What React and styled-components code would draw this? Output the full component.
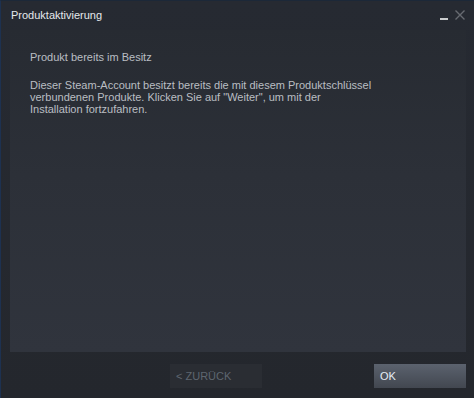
import styled, { createGlobalStyle } from 'styled-components';

const GlobalStyle = createGlobalStyle`
  html, body {
    margin: 0;
    padding: 0;
    background: #24272e;
  }
  body {
    font-family: 'Liberation Sans', Arial, sans-serif;
  }
`;

const Window = styled.div`
  box-sizing: border-box;
  width: 474px;
  height: 398px;
  display: flex;
  flex-direction: column;
  background: linear-gradient(to bottom, #262a32 0%, #24272d 100%);
  border-top: 1px solid #1c2838;
  border-left: 1px solid #1d3150;
`;

const TitleBar = styled.div`
  height: 29px;
  display: flex;
  align-items: center;
  justify-content: space-between;
  padding: 0 9px 0 10px;
`;

const Title = styled.span`
  color: #e4e8ec;
  font-size: 11px;
  margin-top: -1px;
`;

const Controls = styled.div`
  display: flex;
  align-items: flex-end;
  gap: 7px;
  height: 10px;
  margin-top: -1px;
`;

const Minimize = styled.span`
  width: 8px;
  height: 2px;
  background: #c9cbcd;
`;

const Close = styled.svg`
  display: block;
`;

const Panel = styled.div`
  flex: 1;
  margin: 0 8px 0 9px;
  padding: 21px 20px 0 20px;
  background: linear-gradient(to bottom, #272b32 0%, #2c3038 45%, #30343d 100%);
`;

const Heading = styled.div`
  color: #babec3;
  font-size: 11px;
  line-height: 13px;
  margin-bottom: 15px;
`;

const Text = styled.p`
  margin: 0;
  color: #babec3;
  font-size: 11px;
  line-height: 12px;
  white-space: nowrap;
`;

const Footer = styled.div`
  height: 46px;
  display: flex;
  justify-content: flex-end;
  align-items: flex-start;
  padding: 12px 8px 0 0;
  gap: 112px;
  box-sizing: border-box;
`;

const Button = styled.div`
  width: 92px;
  height: 24px;
  box-sizing: border-box;
  padding-left: 6px;
  display: flex;
  align-items: center;
  font-size: 11px;
  color: ${(p) => (p.$primary ? '#e6edf5' : '#5e6670')};
  background: ${(p) =>
    p.$primary
      ? 'linear-gradient(to bottom, #5b626e 0%, #424750 100%)'
      : '#2a2d33'};
`;

export default function App() {
  return (
    <>
      <GlobalStyle />
      <Window>
        <TitleBar>
          <Title>Produktaktivierung</Title>
          <Controls>
            <Minimize />
            <Close width="10" height="10" viewBox="0 0 10 10">
              <path d="M0.5 0.5 L9.5 9.5 M9.5 0.5 L0.5 9.5" stroke="#676b71" strokeWidth="1.4" />
            </Close>
          </Controls>
        </TitleBar>
        <Panel>
          <Heading>Produkt bereits im Besitz</Heading>
          <Text>
            Dieser Steam-Account besitzt bereits die mit diesem Produktschlüssel
            <br />
            verbundenen Produkte. Klicken Sie auf "Weiter", um mit der
            <br />
            Installation fortzufahren.
          </Text>
        </Panel>
        <Footer>
          <Button>&lt; ZURÜCK</Button>
          <Button $primary>OK</Button>
        </Footer>
      </Window>
    </>
  );
}
